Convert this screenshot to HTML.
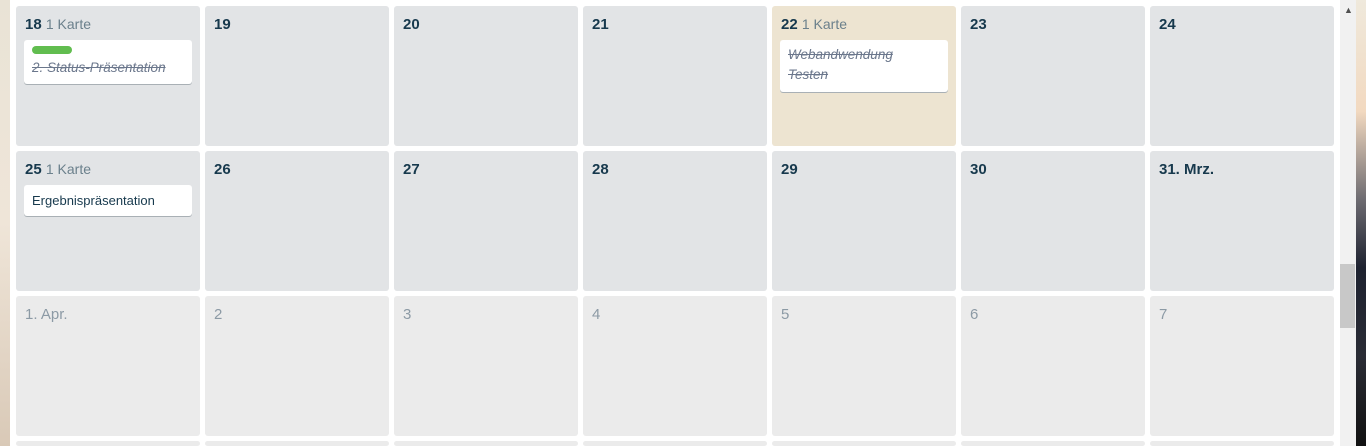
<!DOCTYPE html><html style="width:1366px;height:446px;overflow:hidden"><head><style>
body{margin:0;width:1366px;height:446px;overflow:hidden;position:relative;font-family:"Liberation Sans",sans-serif;background:#fff}
.bgl{position:absolute;left:0;top:0;width:10px;height:446px;background:linear-gradient(#e9e3d6,#efe5d8 50%,#d9c9b7)}
.bgr{position:absolute;left:1356px;top:0;width:10px;height:446px;background:linear-gradient(#efe9dc,#f2d9c0 25%,#6c6a70 45%,#1e2230 60%,#2a2c35 80%,#111 100%)}
.panel{position:absolute;left:10px;top:0;width:1330px;height:446px;background:#fff}
.sb{position:absolute;left:1340px;top:0;width:16px;height:446px;background:#f1f1f1}
.th{position:absolute;left:1340px;top:264px;width:15px;height:64px;background:#c8c8c8}
.c{position:absolute;width:184px;height:140px;background:#e2e4e6;border-radius:3px;overflow:hidden}
.c.n{background:#ebebeb}
.c.t{background:#ede4d1}
.d{position:absolute;left:9px;top:10px;font-size:15px;font-weight:bold;color:#17394d}
.n .d{font-weight:normal;color:#8c9aa5}
.k{font-weight:normal;color:#6b808c;font-size:14px}
.card{position:absolute;left:8px;width:168px;background:#fff;border-radius:3px;box-shadow:0 1px 0 #a9b0b5;font-size:13px;color:#17394d}
.s{font-style:italic;text-decoration:line-through;color:#6b778c;line-height:20px;font-size:13.5px}
</style></head><body>
<div class="bgl"></div><div class="panel"></div><div class="bgr"></div>
<div class="sb"></div><div class="th"></div>
<div style="position:absolute;left:1344px;top:5px;font-size:9px;color:#505050">&#9650;</div>
<div class="c" style="left:16px;top:6px"><div class="d">18 <span class="k">1 Karte</span></div>
<div class="card" style="top:34px;height:44px"><div style="position:absolute;left:8px;top:6px;width:40px;height:8px;border-radius:4px;background:#61bd4f"></div><div class="s" style="position:absolute;left:8px;top:18px">2. Status-Präsentation</div></div></div>
<div class="c" style="left:205px;top:6px"><div class="d">19</div></div>
<div class="c" style="left:394px;top:6px"><div class="d">20</div></div>
<div class="c" style="left:583px;top:6px"><div class="d">21</div></div>
<div class="c t" style="left:772px;top:6px"><div class="d">22 <span class="k">1 Karte</span></div>
<div class="card" style="top:34px;height:52px"><div class="s" style="padding:5px 8px">Webandwendung<br>Testen</div></div></div>
<div class="c" style="left:961px;top:6px"><div class="d">23</div></div>
<div class="c" style="left:1150px;top:6px"><div class="d">24</div></div>

<div class="c" style="left:16px;top:151px"><div class="d">25 <span class="k">1 Karte</span></div>
<div class="card" style="top:34px;height:31px"><div style="padding:8px 8px;line-height:15px">Ergebnispräsentation</div></div></div>
<div class="c" style="left:205px;top:151px"><div class="d">26</div></div>
<div class="c" style="left:394px;top:151px"><div class="d">27</div></div>
<div class="c" style="left:583px;top:151px"><div class="d">28</div></div>
<div class="c" style="left:772px;top:151px"><div class="d">29</div></div>
<div class="c" style="left:961px;top:151px"><div class="d">30</div></div>
<div class="c" style="left:1150px;top:151px"><div class="d">31. Mrz.</div></div>

<div class="c n" style="left:16px;top:296px"><div class="d">1. Apr.</div></div>
<div class="c n" style="left:205px;top:296px"><div class="d">2</div></div>
<div class="c n" style="left:394px;top:296px"><div class="d">3</div></div>
<div class="c n" style="left:583px;top:296px"><div class="d">4</div></div>
<div class="c n" style="left:772px;top:296px"><div class="d">5</div></div>
<div class="c n" style="left:961px;top:296px"><div class="d">6</div></div>
<div class="c n" style="left:1150px;top:296px"><div class="d">7</div></div>

<div class="c n" style="left:16px;top:441px;height:5px"></div>
<div class="c n" style="left:205px;top:441px;height:5px"></div>
<div class="c n" style="left:394px;top:441px;height:5px"></div>
<div class="c n" style="left:583px;top:441px;height:5px"></div>
<div class="c n" style="left:772px;top:441px;height:5px"></div>
<div class="c n" style="left:961px;top:441px;height:5px"></div>
<div class="c n" style="left:1150px;top:441px;height:5px"></div>
</body></html>
